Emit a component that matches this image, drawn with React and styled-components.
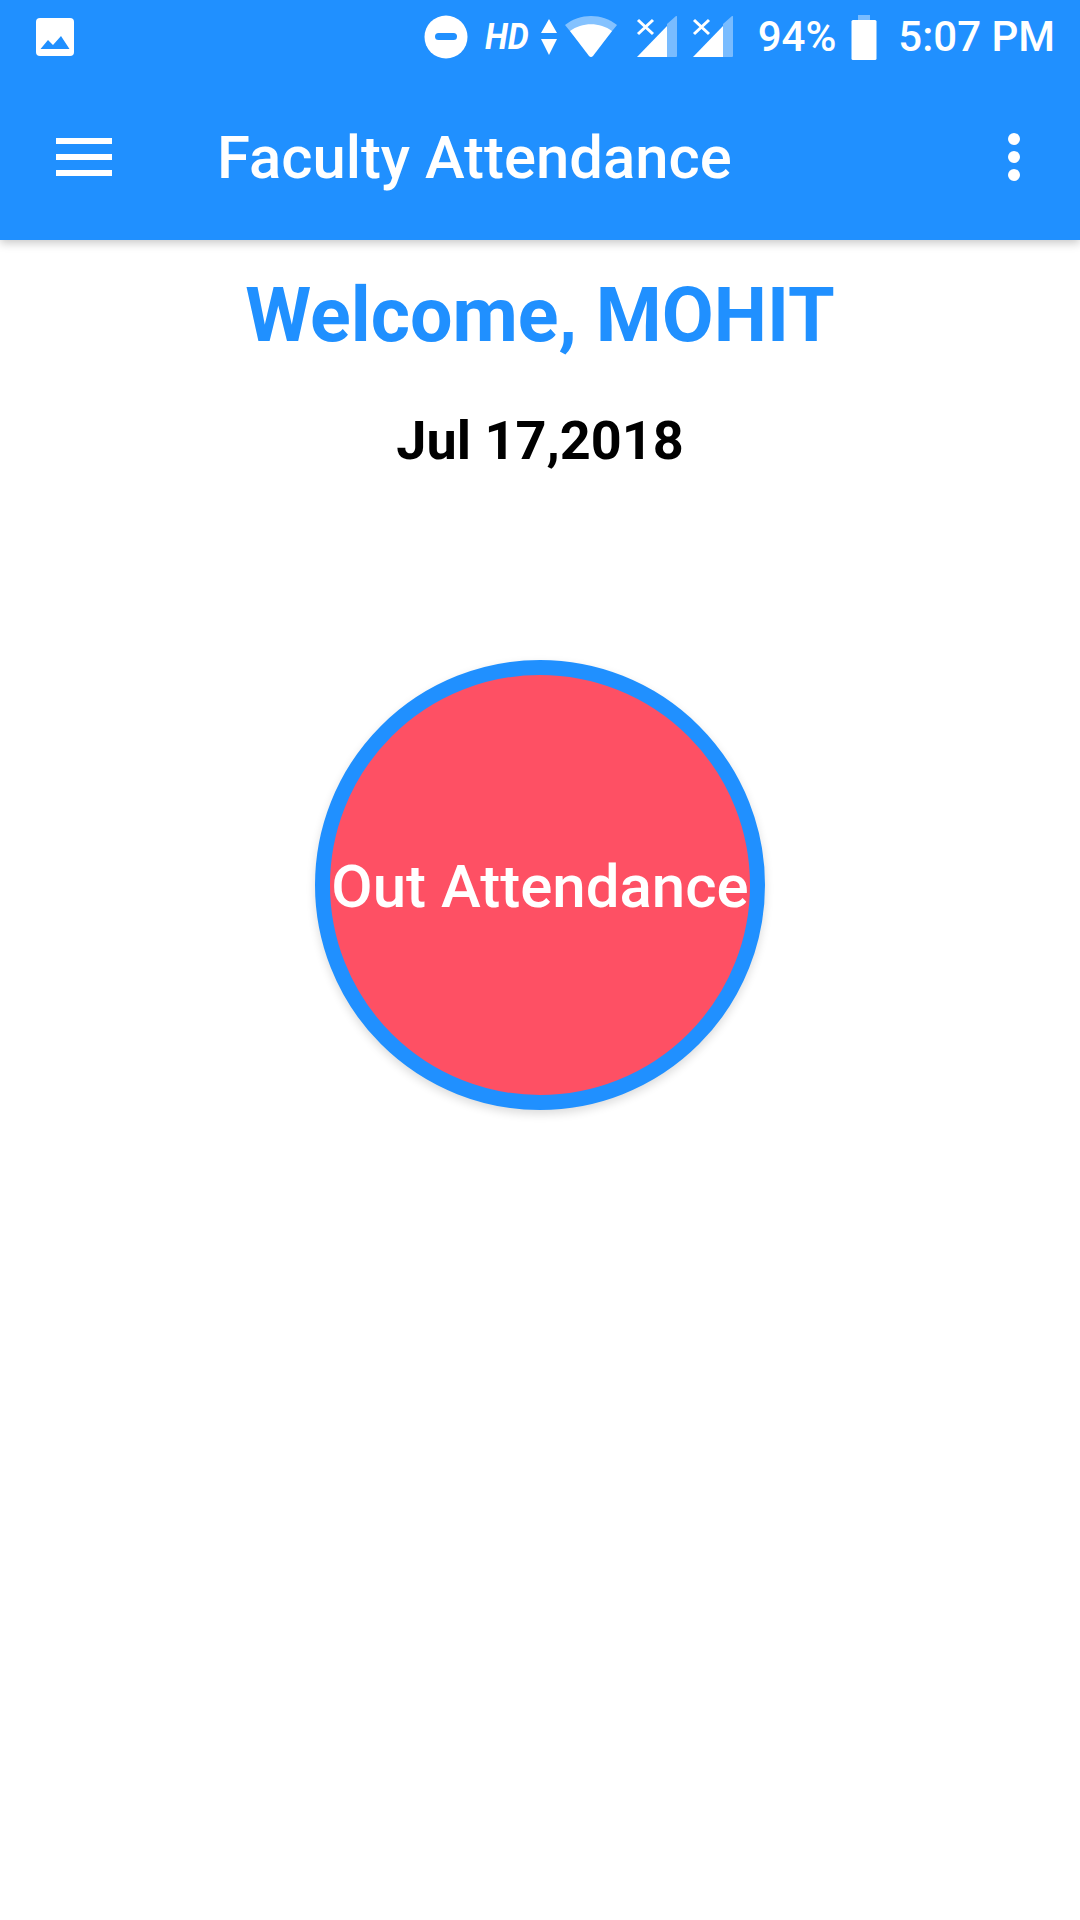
import React from 'react';
import styled, { createGlobalStyle } from 'styled-components';

const GlobalStyle = createGlobalStyle`
  html, body {
    margin: 0;
    padding: 0;
    background: #fff;
    font-family: Roboto, "Liberation Sans", sans-serif;
  }
`;

const Page = styled.div`
  width: 1080px;
  height: 1920px;
  overflow: hidden;
  background: #fff;
`;

const Header = styled.header`
  position: relative;
  height: 240px;
  background: #2090ff;
  color: #fff;
  box-shadow: 0 3px 9px rgba(0, 0, 0, 0.22);
`;

const StatusBar = styled.div`
  display: flex;
  align-items: center;
  height: 74px;
  padding: 0 25px 0 35px;
`;

const StatusRight = styled.div`
  display: flex;
  align-items: center;
  margin-left: auto;
`;

const StatusIcon = styled.svg`
  display: block;
  flex: none;
  margin-left: ${(p) => p.$gap || 0}px;
`;

const HdLabel = styled.span`
  margin-left: 17px;
  font-size: 37px;
  font-weight: 700;
  font-style: italic;
  line-height: 40px;
  transform: scaleX(0.9);
  transform-origin: left center;
  width: 43px;
`;

const StatusText = styled.span`
  margin-left: ${(p) => p.$gap || 0}px;
  font-size: 42px;
  font-weight: 500;
  line-height: 50px;
`;

const Toolbar = styled.div`
  display: flex;
  align-items: center;
  height: 166px;
  padding: 0 56px;
`;

const MenuButton = styled.div`
  display: flex;
  flex-direction: column;
  gap: 10px;
  width: 56px;
  flex: none;
`;

const MenuBar = styled.span`
  display: block;
  height: 6px;
  background: #fff;
`;

const Title = styled.h1`
  margin: 2px 0 0 105px;
  font-size: 59.8px;
  font-weight: 500;
  line-height: 70px;
`;

const MoreButton = styled.div`
  display: flex;
  flex-direction: column;
  gap: 6px;
  margin-left: auto;
  margin-right: 4px;
`;

const Dot = styled.span`
  display: block;
  width: 12px;
  height: 12px;
  border-radius: 50%;
  background: #fff;
`;

const Content = styled.main`
  display: flex;
  flex-direction: column;
  align-items: center;
`;

const Welcome = styled.h2`
  margin: 33px 0 0;
  font-size: 75.4px;
  font-weight: 700;
  line-height: 84px;
  color: #2090ff;
`;

const DateLabel = styled.div`
  margin-top: 52px;
  font-size: 54px;
  font-weight: 700;
  line-height: 64px;
  color: #000;
`;

const AttendanceButton = styled.button`
  display: flex;
  align-items: center;
  justify-content: center;
  box-sizing: border-box;
  width: 450px;
  height: 450px;
  margin-top: 187px;
  padding: 3px 0 0;
  border: 15px solid #2090ff;
  border-radius: 50%;
  background: #fe5064;
  color: #fff;
  font-family: Roboto, sans-serif;
  font-size: 60px;
  font-weight: 500;
  white-space: nowrap;
  box-shadow: 0 4px 10px rgba(0, 0, 0, 0.14);
`;

const ImageIcon = () => (
  <StatusIcon width="40" height="40" viewBox="0 0 40 40">
    <rect x="1" y="1" width="38" height="38" rx="4" fill="#fff" />
    <path d="M5.5 32 L13 23 L18 28 L26 19 L34.5 32 Z" fill="#2090ff" />
  </StatusIcon>
);

const MinusIcon = () => (
  <StatusIcon width="44" height="44" viewBox="0 0 44 44">
    <circle cx="22" cy="22" r="21.5" fill="#fff" />
    <rect x="11" y="18" width="22" height="7" rx="3.5" fill="#2090ff" />
  </StatusIcon>
);

const ArrowsIcon = () => (
  <StatusIcon $gap={12} width="18" height="36" viewBox="0 0 18 36">
    <path d="M9 0 L17 14 L1 14 Z M1 20 L17 20 L9 36 Z" fill="#fff" />
  </StatusIcon>
);

const WifiIcon = () => (
  <StatusIcon $gap={7} width="52" height="42" viewBox="0 0 52 42">
    <path d="M0 9 C15 -3 37 -3 52 9 L26 41 Z" fill="#fff" fillOpacity="0.45" />
    <path d="M5 15 C17 6 35 6 47 15 L28 40 Q26 42 24 40 Z" fill="#fff" />
  </StatusIcon>
);

const SignalIcon = ({ gap }) => (
  <StatusIcon $gap={gap} width="42" height="42" viewBox="0 0 42 42">
    <path d="M31 8 L40 0 Q41 -0.5 41 1 L41 40 Q41 41 40 41 L31 41 Z" fill="#fff" fillOpacity="0.4" />
    <path d="M31 10 L31 41 L1 41 Z" fill="#fff" />
    <path d="M2 4 L17 18 M17 4 L2 18" stroke="#fff" strokeWidth="3" />
  </StatusIcon>
);

const BatteryIcon = () => (
  <StatusIcon $gap={15} width="26" height="45" viewBox="0 0 26 45">
    <rect x="7" y="0" width="12" height="6" fill="#fff" fillOpacity="0.4" />
    <rect x="0.5" y="5" width="25" height="40" rx="1.5" fill="#fff" />
  </StatusIcon>
);

const App = () => (
  <Page>
    <GlobalStyle />
    <Header>
      <StatusBar>
        <ImageIcon />
        <StatusRight>
          <MinusIcon />
          <HdLabel>HD</HdLabel>
          <ArrowsIcon />
          <WifiIcon />
          <SignalIcon gap={19} />
          <SignalIcon gap={14} />
          <StatusText $gap={24}>94%</StatusText>
          <BatteryIcon />
          <StatusText $gap={21}>5:07 PM</StatusText>
        </StatusRight>
      </StatusBar>
      <Toolbar>
        <MenuButton>
          <MenuBar />
          <MenuBar />
          <MenuBar />
        </MenuButton>
        <Title>Faculty Attendance</Title>
        <MoreButton>
          <Dot />
          <Dot />
          <Dot />
        </MoreButton>
      </Toolbar>
    </Header>
    <Content>
      <Welcome>Welcome, MOHIT</Welcome>
      <DateLabel>Jul 17,2018</DateLabel>
      <AttendanceButton>Out Attendance</AttendanceButton>
    </Content>
  </Page>
);

export default App;
